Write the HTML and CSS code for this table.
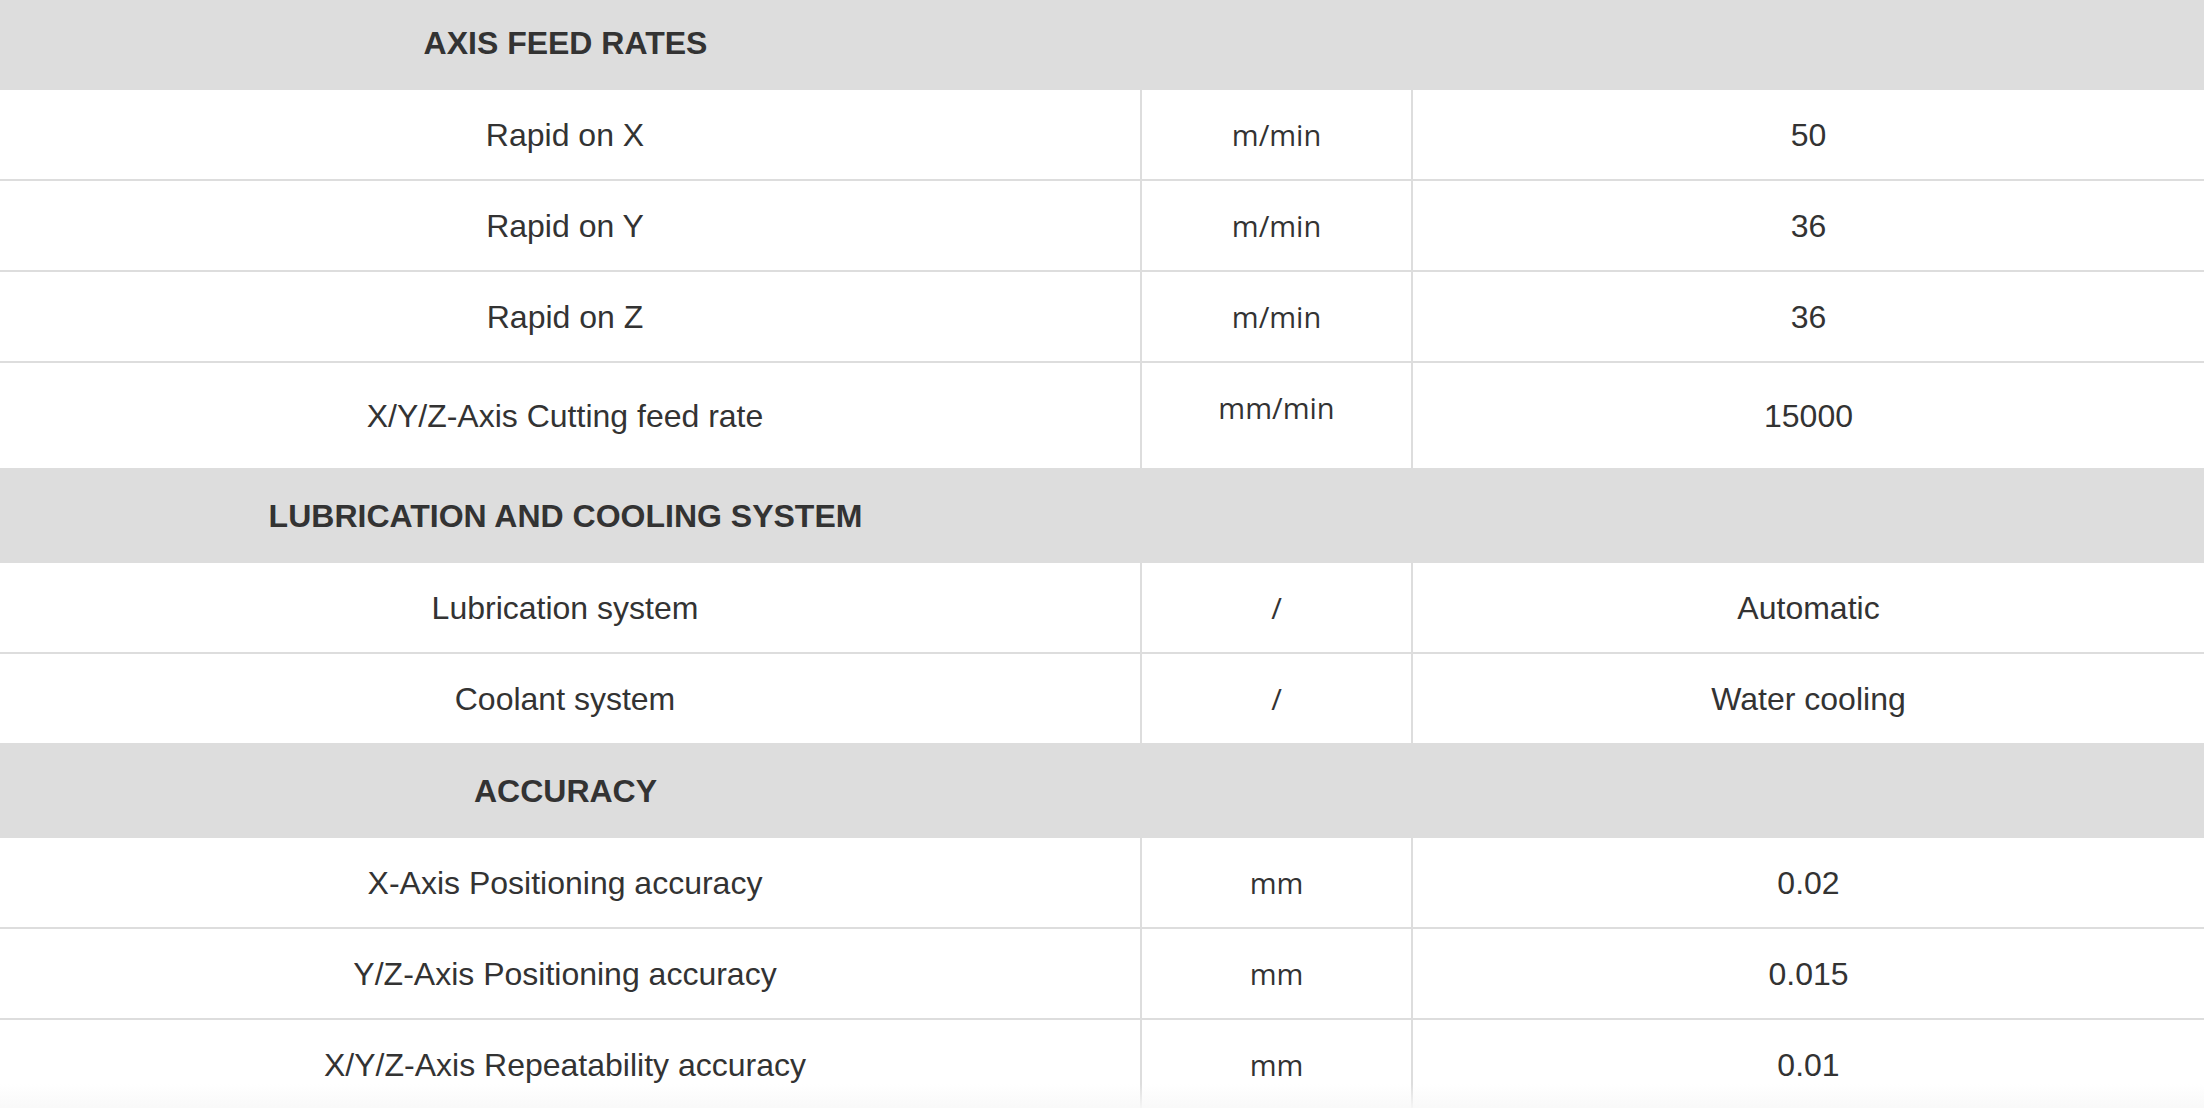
FILE: index.html
```html
<!DOCTYPE html>
<html>
<head>
<meta charset="utf-8">
<link rel="stylesheet" href="styles.css">
</head>
<body>
<table class="spec">
  <colgroup>
    <col class="c-name">
    <col class="c-unit">
    <col class="c-val">
  </colgroup>
  <tbody>
    <tr class="sec"><td class="sec-title">AXIS FEED RATES</td><td></td><td></td></tr>
    <tr><td class="name">Rapid on X</td><td class="unit">m/min</td><td class="val">50</td></tr>
    <tr><td class="name">Rapid on Y</td><td class="unit">m/min</td><td class="val">36</td></tr>
    <tr><td class="name">Rapid on Z</td><td class="unit">m/min</td><td class="val">36</td></tr>
    <tr><td class="name">X/Y/Z-Axis Cutting feed rate</td><td class="unit unit-top">mm/min</td><td class="val">15000</td></tr>
    <tr class="sec"><td class="sec-title">LUBRICATION AND COOLING SYSTEM</td><td></td><td></td></tr>
    <tr><td class="name">Lubrication system</td><td class="unit">/</td><td class="val">Automatic</td></tr>
    <tr><td class="name">Coolant system</td><td class="unit">/</td><td class="val">Water cooling</td></tr>
    <tr class="sec"><td class="sec-title">ACCURACY</td><td></td><td></td></tr>
    <tr><td class="name">X-Axis Positioning accuracy</td><td class="unit">mm</td><td class="val">0.02</td></tr>
    <tr><td class="name">Y/Z-Axis Positioning accuracy</td><td class="unit">mm</td><td class="val">0.015</td></tr>
    <tr><td class="name">X/Y/Z-Axis Repeatability accuracy</td><td class="unit">mm</td><td class="val">0.01</td></tr>
  </tbody>
</table>
<div class="fade"></div>
</body>
</html>
```
FILE: styles.css
```css
html, body {
  margin: 0;
  padding: 0;
  background: #ffffff;
  overflow: hidden;
}
body {
  width: 2204px;
  height: 1108px;
  position: relative;
  font-family: "Liberation Sans", Arial, sans-serif;
  color: #333333;
}
.spec {
  width: 2204px;
  border-collapse: collapse;
  table-layout: fixed;
  margin-top: -3px;
}
.c-name { width: 1141px; }
.c-unit { width: 271px; }
.c-val { width: 792px; }
.spec td {
  font-size: 32px;
  line-height: 48px;
  padding: 21px 10px 20px 0;
  text-align: center;
  vertical-align: middle;
  border-bottom: 2px solid #dddddd;
}
.spec td.name {
  border-right: 2px solid #dddddd;
}
.spec td.unit {
  font-family: "Open Sans", "Noto Sans", sans-serif;
  font-size: 29px;
  padding-left: 0;
  padding-right: 0;
  border-right: 2px solid #dddddd;
}
.spec td.unit-top {
  vertical-align: top;
  padding-top: 21px;
  padding-bottom: 36px;
}
.spec td.val {
  padding-right: 0;
}
.spec tr.sec td {
  background: #dddddd;
  padding-top: 22px;
  padding-bottom: 21px;
  border-right: none;
}
.spec td.sec-title {
  font-weight: bold;
}
.fade {
  position: absolute;
  left: 0;
  right: 0;
  bottom: 0;
  height: 24px;
  background: linear-gradient(to bottom, rgba(250,250,250,0), rgba(248,248,248,0.9));
  pointer-events: none;
}
```
